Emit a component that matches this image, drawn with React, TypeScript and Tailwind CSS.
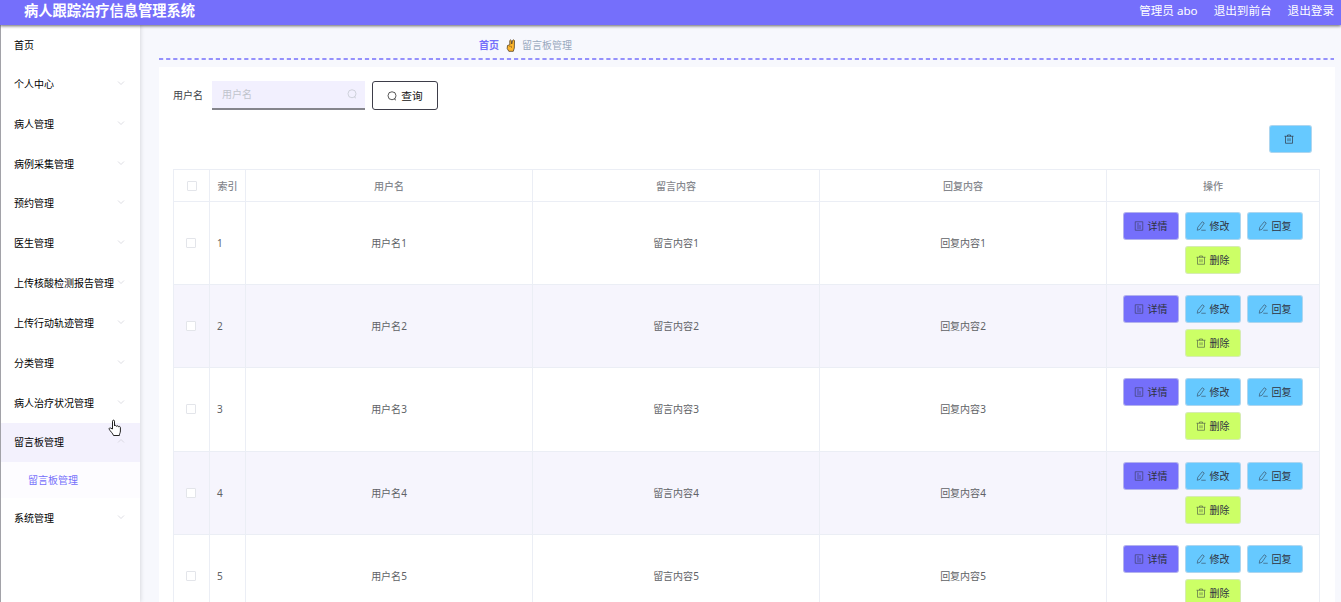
import React from "react";

const menu = [
  "个人中心", "病人管理", "病例采集管理", "预约管理", "医生管理",
  "上传核酸检测报告管理", "上传行动轨迹管理", "分类管理", "病人治疗状况管理",
];

function Icon({ d, size = 10, className = "" }: { d: string; size?: number; className?: string }) {
  return (
    <svg width={size} height={size} viewBox="0 0 20 20" fill="none" stroke="currentColor" strokeWidth="1.4" className={"shrink-0 " + className}>
      <path d={d} />
    </svg>
  );
}

const TRASH = "M1 4.500h18M7 4.500V2h6v2.500M3 4.500v14h14v-14M8 8.500v6M12 8.500v6";
const DOC = "M2.500 1.500h15v17h-15zM6 6h4M6 10h8M6 14h8";
const EDIT = "M12.500 1.500l4 2.500L8 16.500l-5.500 2 1-6zM10.500 18.500h9";
const SEARCH = "M10 1.500a8 8 0 1 0 0 16a8 8 0 1 0 0-16M14.500 15.500l3.500 3";

function Chevron({ up = false }: { up?: boolean }) {
  return (
    <svg width="8" height="8" viewBox="0 0 8 8" fill="none" stroke="#d3d3da" strokeWidth="0.8" className="mb-[2px] shrink-0">
      <path d={up ? "M1 5.500l3-3 3 3" : "M1 2.500l3 3 3-3"} />
    </svg>
  );
}

function Action({ icon, label, color }: { icon: string; label: string; color: string }) {
  return (
    <button className={"flex h-[28px] w-[56px] items-center justify-center gap-[4px] rounded-[3px] border border-[#dcdfe6]/60 text-[#2f3340] " + color}>
      <Icon d={icon} className="opacity-75" />
      {label}
    </button>
  );
}

function Box() {
  return <span className="block h-[10px] w-[10px] rounded-[1px] border border-[#e3e5ea] bg-white" />;
}

const cols = "grid grid-cols-[36px_36px_287px_287px_287px_213px]";
const cell = "flex items-center justify-center border-r border-[#ebeef5]";

function Row({ n }: { n: number }) {
  return (
    <div className={cols + " h-[83.200px] border-b border-[#ebeef5] " + (n % 2 === 0 ? "bg-[#f6f5fd]" : "bg-white")}>
      <div className={cell + " pr-[2px]"}><Box /></div>
      <div className="flex items-center border-r border-[#ebeef5] pl-[7px]">{n}</div>
      <div className={cell}>用户名{n}</div>
      <div className={cell}>留言内容{n}</div>
      <div className={cell}>回复内容{n}</div>
      <div className="flex flex-wrap content-center justify-center gap-x-[6px] gap-y-[6px] border-r border-[#ebeef5] pr-px">
        <Action icon={DOC} label="详情" color="bg-[#756ffb]" />
        <Action icon={EDIT} label="修改" color="bg-[#66c9ff]" />
        <Action icon={EDIT} label="回复" color="bg-[#66c9ff]" />
        <Action icon={TRASH} label="删除" color="bg-[#ccff66]" />
      </div>
    </div>
  );
}

export default function App() {
  return (
    <div className="relative flex h-[602px] w-[1341px] flex-col overflow-hidden bg-[#f7f8fd] font-['Noto_Sans','Noto_Sans_CJK_SC',sans-serif] text-[10px] leading-[14px] text-[#606266]">
      <header className="z-10 flex h-[25px] shrink-0 items-center justify-between bg-[#756ffb] pr-[7px] pb-[3px] pl-[24px] text-white shadow-[0_1px_3px_rgba(0,0,0,0.6)]">
        <h1 className="text-[14.250px] font-bold">病人跟踪治疗信息管理系统</h1>
        <div className="flex gap-[16px] text-[11.600px]">
          <span>管理员 abo</span>
          <span>退出到前台</span>
          <span>退出登录</span>
        </div>
      </header>
      <div className="flex min-h-0 flex-1">
        <aside className="w-[140px] shrink-0 border-l border-[#a2a2a8] bg-white text-black shadow-[1px_0_4px_rgba(0,0,0,0.120)]">
          <div className="flex h-[39px] items-center pl-[13px]">首页</div>
          {menu.map((m) => (
            <div key={m} className="flex h-[39.850px] items-center justify-between pr-[15px] pl-[13px]">
              <span className="w-[103px] whitespace-nowrap">{m}</span>
              <Chevron />
            </div>
          ))}
          <div className="flex h-[39.400px] items-center justify-between bg-[#f3f1fd] pr-[15px] pl-[13px]">
            留言板管理<Chevron up />
          </div>
          <div className="flex h-[36px] items-center bg-[#fdfcff] pl-[27px] text-[#756ffb]">留言板管理</div>
          <div className="flex h-[40px] items-center justify-between pr-[15px] pl-[13px]">
            系统管理<Chevron />
          </div>
        </aside>
        <main className="flex min-w-0 flex-1 flex-col pr-[6px] pl-[19px]">
          <nav className="flex h-[33px] shrink-0 items-center pt-[7px] pl-[320px]">
            <b className="font-bold text-[#756ffb]">首页</b>
            <svg width="10" height="13" viewBox="0 0 10 13" className="mr-[6px] ml-[7px]">
              <path d="M1.500 6.500L3.800 5.800 3.800 1.500Q4.500.3 5.300 1.500L5.700 5 6.700 1.300Q7.800.3 8.500 1.600L8.300 9 7.300 12.300H2.800L1.200 9.500z" fill="#ffb72b" stroke="#54401f" strokeWidth=".8" />
              <path d="M3 7.300h2.500v1.700" fill="none" stroke="#8a5c1c" strokeWidth=".6" />
            </svg>
            <span className="text-[#97a8be]">留言板管理</span>
          </nav>
          <svg width="1175" height="2" className="shrink-0">
            <path d="M0 1H1175" stroke="#756ffb" strokeWidth="1.500" strokeDasharray="4.200 2.900" />
          </svg>
          <section className="mt-[7px] flex-1 bg-white px-[14px] pt-[13px]">
            <div className="flex h-[30px] items-center">
              <label className="w-[39px] text-[#404248]">用户名</label>
              <div className="flex h-[29px] w-[153px] items-center justify-between border-b-2 border-[#85858c] bg-[#f2f0fe] pr-[8px] pl-[10px] text-[#c0c4cc]">
                用户名<Icon d={SEARCH} />
              </div>
              <button className="ml-[7px] flex h-[29px] w-[66px] items-center justify-center gap-[4px] rounded-[3px] border border-[#3d3d49] bg-white pt-px text-[10.700px] text-[#111]">
                <Icon d={SEARCH} />查询
              </button>
            </div>
            <div className="mt-[15px] flex justify-end pr-[9px]">
              <button className="flex h-[28px] w-[43px] items-center rounded-[3px] border border-[#dcdfe6]/60 bg-[#66c9ff] pl-[14px] text-[#2f3340]">
                <Icon d={TRASH} />
              </button>
            </div>
            <div className="mt-[16px] w-[1147px] border-t border-l border-[#ebeef5]">
              <div className={cols + " h-[32px] border-b border-[#ebeef5] font-medium text-[#85878d]"}>
                <div className={cell}><Box /></div>
                <div className={cell}>索引</div>
                <div className={cell}>用户名</div>
                <div className={cell}>留言内容</div>
                <div className={cell}>回复内容</div>
                <div className={cell}>操作</div>
              </div>
              {[1, 2, 3, 4, 5].map((n) => <Row key={n} n={n} />)}
            </div>
          </section>
        </main>
      </div>
      <svg width="14" height="19" viewBox="0 0 14 19" className="absolute top-[419px] left-[108px] z-20">
        <path d="M4.500 10V2.200C4.500.8 6.500.8 6.500 2.200V7c.2-1 2-.8 2 .4.300-1 2-.7 2 .4.500-.8 1.900-.4 1.900.8V12c0 2-1 2.500-1 4.500H5.500C5 14.500 2 12 1.200 10.200c-.4-1.200.8-1.700 1.600-1z" fill="white" stroke="#222" strokeWidth="1" />
      </svg>
    </div>
  );
}
